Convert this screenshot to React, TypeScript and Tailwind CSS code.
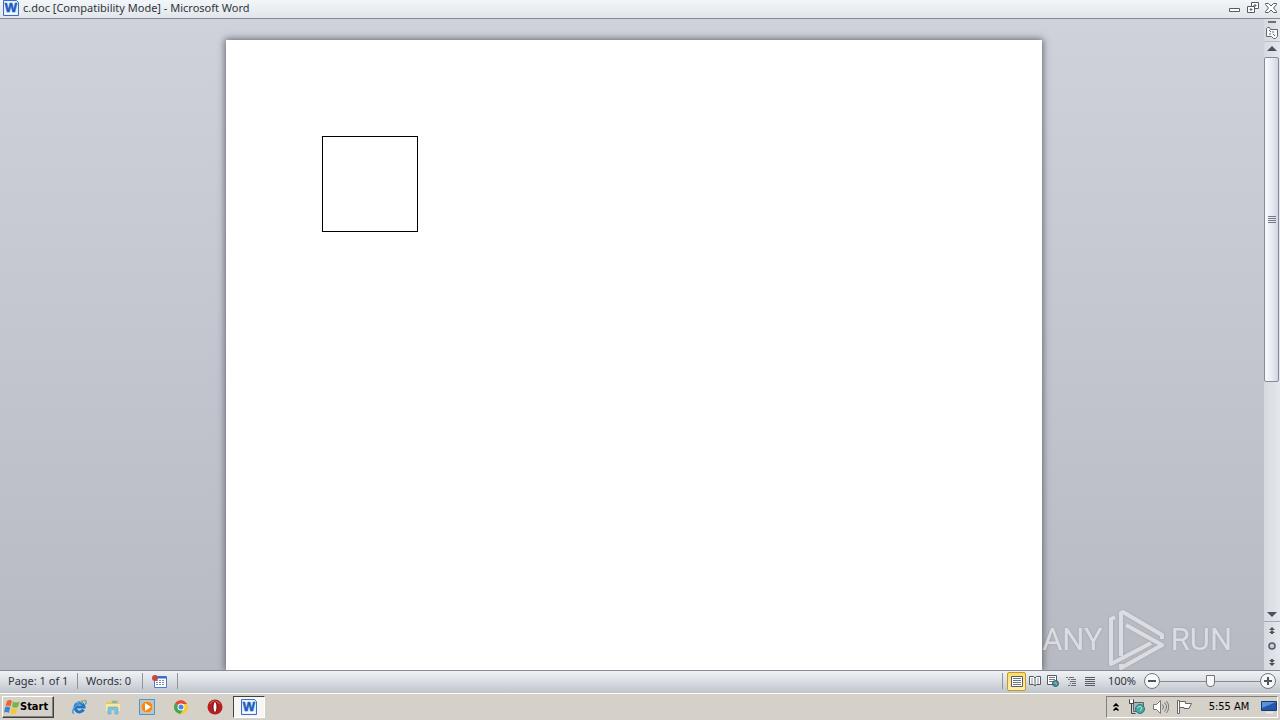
import React from 'react';

interface IconButtonProps {
  label: string;
  className?: string;
  children: React.ReactNode;
}

const IconButton: React.FC<IconButtonProps> = ({ label, className = '', children }) => (
  <button type="button" aria-label={label} className={`flex items-center justify-center ${className}`}>
    {children}
  </button>
);

const WordIcon = () => (
  <svg width="16" height="16" viewBox="0 0 16 16" aria-hidden="true">
    <path d="M.5.5h13l2 2v13H.5z" fill="#e3effc" stroke="#3b6fc0" />
    <path d="M2 2.500h9M2 13.500h12" stroke="#fff" />
    <text x="8" y="12" textAnchor="middle" fontFamily="Liberation Sans, sans-serif" fontSize="13" fontWeight="bold" fill="#1c5cc0" stroke="#1c5cc0" strokeWidth=".5">W</text>
  </svg>
);

const TitleBar = () => (
  <header className="flex h-[19px] shrink-0 items-center justify-between border-b border-[#868b93] bg-linear-to-b from-[#f3f6f8] to-[#e1e6eb] pl-[3px] pr-[2px] pb-[2px]">
    <div className="flex items-center gap-1">
      <WordIcon />
      <h1 className="font-['Noto_Sans',sans-serif] text-[11px] leading-4 whitespace-nowrap text-[#30343b]">c.doc [Compatibility Mode] - Microsoft Word</h1>
    </div>
    <div className="flex items-center gap-1">
      <IconButton label="Minimize" className="h-4 w-[14px]">
        <svg width="12" height="12" viewBox="0 0 12 12"><path d="M.5 6.500h10v3H.5z" fill="#fff" stroke="#555a66" /></svg>
      </IconButton>
      <IconButton label="Restore" className="h-4 w-[14px]">
        <svg width="12" height="12" viewBox="0 0 12 12" fill="#fff" stroke="#555a66">
          <path d="M4.500.5h7v6h-7z" /><path d="M7 3h2v1H7z" /><path d="M.5 4.500h7v6h-7z" /><path d="M3 7h2v1H3z" />
        </svg>
      </IconButton>
      <IconButton label="Close" className="h-4 w-[14px]">
        <svg width="12" height="12" viewBox="0 0 12 12">
          <path d="M.5 1.500h3L6 4l2.500-2.500h3v1L8.500 6l3 3.500v1h-3L6 8l-2.500 2.500h-3v-1l3-3.500-3-3.500z" fill="#fff" stroke="#555a66" />
        </svg>
      </IconButton>
    </div>
  </header>
);

const Watermark = () => (
  <div className="absolute right-8 bottom-0 flex h-[60px] items-center gap-[6px] font-['Roboto',sans-serif] text-[31px] leading-[60px] text-white opacity-50 drop-shadow-[0_0_1px_#7f848c]">
    <span>ANY</span>
    <svg width="56" height="60" viewBox="0 0 56 60" fill="none" stroke="#fff" strokeWidth="4" strokeLinejoin="round">
      <path d="M6 7L2 9v45l40-21" />
      <path d="M12 46V3l2-1 39 23v4" />
      <path d="M17 15l36 20-41 23v-4" />
    </svg>
    <span>RUN</span>
  </div>
);

const ScrollBar = () => (
  <aside className="flex w-4 shrink-0 flex-col bg-linear-to-r from-[#d5dae1] to-[#e4e8ed]">
    <IconButton label="Split" className="h-[6px] w-full">
      <span className="h-[2px] w-2 bg-[#6b7079]" />
    </IconButton>
    <IconButton label="View ruler" className="h-[17px] w-full border-b border-[#bcc1c8]">
      <svg width="12" height="12" viewBox="0 0 12 12" fill="#f8f8f8" stroke="#646972">
        <path d="M.5 1.500l1-1h2l1 2h7v7l-2 2h-2l-2-2h-5z" /><path d="M3 3l2 2M7 7l2 2M7 4v2M3 7h2" />
      </svg>
    </IconButton>
    <IconButton label="Scroll up" className="h-[15px] w-full pb-[2px]">
      <svg width="10" height="5" viewBox="0 0 10 5"><path d="M0 5l5-5 5 5z" fill="#4b505b" /></svg>
    </IconButton>
    <div className="flex min-h-0 flex-1 flex-col">
      <div className="flex h-[59%] w-[15px] flex-col items-center justify-center gap-px rounded-[2px] border border-[#858b98] bg-linear-to-r from-[#fafbfe] via-[#e9ecf4] to-[#d1d6e2]">
        <span className="h-px w-2 bg-[#737985]" />
        <span className="h-px w-2 bg-[#737985]" />
        <span className="h-px w-2 bg-[#737985]" />
        <span className="h-px w-2 bg-[#737985]" />
      </div>
    </div>
    <IconButton label="Scroll down" className="h-[15px] w-full border-b border-[#a6abb3]">
      <svg width="10" height="5" viewBox="0 0 10 5"><path d="M0 0h10L5 5z" fill="#4b505b" /></svg>
    </IconButton>
    <IconButton label="Previous page" className="h-4 w-full">
      <svg width="6" height="7" viewBox="0 0 6 7" fill="#4b505b"><path d="M0 3l3-3 3 3zM0 6l3-3 3 3zM2 6h2v1H2z" /></svg>
    </IconButton>
    <IconButton label="Select browse object" className="h-4 w-full">
      <svg width="8" height="8" viewBox="0 0 8 8"><circle cx="4" cy="4" r="3" fill="#c9cdd3" stroke="#555a66" strokeWidth="1.500" /></svg>
    </IconButton>
    <IconButton label="Next page" className="h-4 w-full">
      <svg width="6" height="7" viewBox="0 0 6 7" fill="#4b505b"><path d="M0 1l3 3 3-3zM0 4l3 3 3-3zM2 0h2v1H2z" /></svg>
    </IconButton>
  </aside>
);

const Divider = () => <span className="h-4 w-px bg-[#8f949d]" />;

const ViewButtons = () => (
  <div className="flex items-center">
    <IconButton label="Print layout" className="h-[19px] w-[19px] rounded-[2px] border border-[#c29b29] bg-linear-to-b from-[#fbdc72] to-[#fff0a3]">
      <svg width="12" height="11" viewBox="0 0 12 11"><path d="M.5.5h11v10H.5z" fill="#fff" stroke="#555a66" /><path d="M2 2.500h8M2 4.500h8M2 6.500h8M2 8.500h8" stroke="#6e7480" /></svg>
    </IconButton>
    <IconButton label="Full screen reading" className="h-[19px] w-[18px]">
      <svg width="12" height="11" viewBox="0 0 12 11" fill="#fff" stroke="#555a66"><path d="M.5.500h4L6 2l1.500-1.500h4v8h-4L6 10 4.500 8.500h-4zM6 2v8" /><path d="M2 3h2M2 5h2M2 7h2M8 3h2M8 5h2M8 7h2" stroke="#8d929b" /></svg>
    </IconButton>
    <IconButton label="Web layout" className="h-[19px] w-[18px]">
      <svg width="12" height="12" viewBox="0 0 12 12"><path d="M.5.500h9v9h-9z" fill="#fff" stroke="#555a66" /><path d="M2 2.500h6M2 4.500h6M2 6.500h4" stroke="#737985" /><circle cx="8.500" cy="8.500" r="3" fill="#478ca0" stroke="#276476" /><path d="M7 8l2-1v2l1 1" stroke="#8bc675" fill="none" /></svg>
    </IconButton>
    <IconButton label="Outline" className="h-[19px] w-[18px]">
      <svg width="10" height="9" viewBox="0 0 10 9" stroke="#686d77"><path d="M0 .5h2M3 .5h5M2 2.500h2M5 2.500h5M4 4.500h6M4 6.500h1M6 6.500h4M2 8.500h2M5 8.500h5" /></svg>
    </IconButton>
    <IconButton label="Draft" className="h-[19px] w-[19px]">
      <svg width="10" height="9" viewBox="0 0 10 9" stroke="#555a66"><path d="M0 .5h10M0 2.500h10M0 4.500h10M0 6.500h10M0 8.500h10" /></svg>
    </IconButton>
  </div>
);

const StatusBar = () => (
  <footer className="flex h-[23px] shrink-0 items-center justify-between border-t border-[#858a93] bg-linear-to-b from-[#f0f2f5] via-[#d9dde2] to-[#bfc4cc] pb-[2px] font-['Noto_Sans',sans-serif] text-[11px] leading-4 text-[#30343b]">
    <div className="flex items-center">
      <button type="button" className="w-[77px] pl-2 text-left whitespace-nowrap">Page: 1 of 1</button>
      <Divider />
      <button type="button" className="w-[64px] pl-2 text-left whitespace-nowrap">Words: 0</button>
      <Divider />
      <IconButton label="Record macro" className="h-4 w-[34px]">
        <svg width="16" height="13" viewBox="0 0 16 13">
          <path d="M2.500 1.500h12v11h-12z" fill="#fff" stroke="#4c79c9" /><path d="M3 2.500h11" stroke="#356bca" strokeWidth="2" />
          <path d="M4 5.500h9M4 7.500h9M4 9.500h9" stroke="#8390ac" strokeDasharray="2 1" /><circle cx="3" cy="3" r="3" fill="#c34b3e" />
        </svg>
      </IconButton>
      <Divider />
    </div>
    <div className="flex items-center">
      <Divider />
      <div className="pl-1"><ViewButtons /></div>
      <button type="button" className="w-[45px] pl-px text-center whitespace-nowrap">100%</button>
      <IconButton label="Zoom out" className="h-4 w-4 rounded-full border border-[#71767f] bg-[#f6f7f8]">
        <span className="h-[2px] w-2 bg-[#4f545d]" />
      </IconButton>
      <input
        type="range"
        aria-label="Zoom"
        min={0}
        max={200}
        defaultValue={100}
        className="h-4 w-[100px] appearance-none bg-transparent bg-[linear-gradient(#868b93,#868b93)] bg-[length:100%_1px] bg-center bg-no-repeat [&::-webkit-slider-thumb]:h-3 [&::-webkit-slider-thumb]:w-[9px] [&::-webkit-slider-thumb]:appearance-none [&::-webkit-slider-thumb]:rounded-b-[4px] [&::-webkit-slider-thumb]:border [&::-webkit-slider-thumb]:border-[#71767f] [&::-webkit-slider-thumb]:bg-[#f8f8f9]"
      />
      <IconButton label="Zoom in" className="mr-1 h-4 w-4 rounded-full border border-[#71767f] bg-[#f6f7f8]">
        <svg width="8" height="8" viewBox="0 0 8 8"><path d="M0 4h8M4 0v8" stroke="#4f545d" strokeWidth="2" /></svg>
      </IconButton>
    </div>
  </footer>
);

const WindowsLogo = () => (
  <svg width="16" height="16" viewBox="0 0 16 16" aria-hidden="true">
    <path d="M3 2q3-2 5 0L6.500 7.500Q4 6 1.500 7z" fill="#ed6334" />
    <path d="M9 2.500q3 2 6.500 0L14 8q-3 1.500-6-.2z" fill="#71b845" />
    <path d="M1.200 8q2.500-1 5 .5L4.800 14Q2.500 12.500 0 13.500z" fill="#3b86d1" />
    <path d="M7.500 9q3 1.500 6 .2L12.200 14.500q-3 1.500-6-.2z" fill="#f7c640" />
  </svg>
);

const QuickLaunch = () => (
  <nav className="flex items-center">
    <IconButton label="Internet Explorer" className="h-6 w-[34px]">
      <svg width="16" height="16" viewBox="0 0 16 16" fill="none">
        <path d="M12.500 10.500a4.500 4.500 0 1 1 .5-2.500H4" stroke="#1d75c8" strokeWidth="3" />
        <path d="M12 5a5 4 0 0 0-7-1" stroke="#65bff3" />
        <path d="M3 14.500C-2 13 8 1 14 1.500c2 .5 1 3 0 4" stroke="#4d9bdc" strokeWidth="1.500" />
        <path d="M9 3c4-2.500 6-2 5.500.5" stroke="#e5b72f" />
      </svg>
    </IconButton>
    <IconButton label="Windows Explorer" className="h-6 w-[34px]">
      <svg width="16" height="16" viewBox="0 0 16 16">
        <path d="M1 3h5l1-2h6l1 3v8H1z" fill="#e8c565" /><path d="M7 2h5v2H7z" fill="#6fb7d3" />
        <path d="M1 5h14v7H1z" fill="#fae99b" /><path d="M3 15V9q0-1 1-1h8q1 0 1 1v6h-3v-4H6v4z" fill="#7cc5e8" stroke="#529fc7" strokeWidth=".5" />
      </svg>
    </IconButton>
    <IconButton label="Media Player" className="h-6 w-[34px]">
      <svg width="16" height="16" viewBox="0 0 16 16">
        <path d="M.5.500h15v15H.5z" fill="#a5c9e9" stroke="#5792c2" /><circle cx="8" cy="8" r="6" fill="#f18a18" stroke="#fac478" /><path d="M6 4l6 4-6 4z" fill="#fff" />
      </svg>
    </IconButton>
    <IconButton label="Chrome" className="h-6 w-[34px]">
      <svg width="14" height="14" viewBox="0 0 14 14">
        <circle cx="7" cy="7" r="7" fill="#f7cb32" /><path d="M7 7L1 3.500A7 7 0 0 1 13 4H7z" fill="#e04a3b" />
        <path d="M1 3.500A7 7 0 0 0 6.500 14l3-5.500L7 7z" fill="#45a556" /><circle cx="7" cy="7" r="3.500" fill="#fff" /><circle cx="7" cy="7" r="2.500" fill="#4a87de" />
      </svg>
    </IconButton>
    <IconButton label="Opera" className="h-6 w-[34px]">
      <svg width="16" height="16" viewBox="0 0 16 16">
        <circle cx="8" cy="8" r="7.500" fill="#b91d20" /><path d="M3 5q4-6 10 0" fill="none" stroke="#df6257" /><ellipse cx="8" cy="8" rx="2" ry="5.500" fill="#fff" stroke="#6e080d" />
      </svg>
    </IconButton>
  </nav>
);

const Tray = () => (
  <div className="flex h-[22px] items-center border border-t-[#808080] border-r-white border-b-white border-l-[#808080] text-[11px] leading-4 text-black">
    <IconButton label="Show hidden icons" className="h-5 w-[18px]">
      <svg width="6" height="8" viewBox="0 0 6 8" fill="none" stroke="#000" strokeWidth="1.500"><path d="M.5 3.500L3 1l2.500 2.500M.5 7.500L3 5l2.500 2.500" /></svg>
    </IconButton>
    <IconButton label="Network" className="h-5 w-6">
      <svg width="16" height="16" viewBox="0 0 16 16">
        <path d="M4.500 3.500h10v9h-10z" fill="#a7b7bc" stroke="#55676d" /><path d="M.5.500v4h4v-4M2.500 5v9.500h4" fill="none" stroke="#444" /><path d="M1 1h3v3H1z" fill="#fff" />
        <circle cx="11" cy="10" r="4.500" fill="#49a7a1" stroke="#2b7b7e" /><path d="M8 9l3-2 2 2-2 3" fill="none" stroke="#b8e5d0" />
      </svg>
    </IconButton>
    <IconButton label="Volume" className="h-5 w-6">
      <svg width="16" height="14" viewBox="0 0 16 14" fill="#fff" stroke="#777">
        <path d="M.5 4.500h3l4-4v13l-4-4h-3z" /><path d="M9.500 4.500q2 2.500 0 5M11.500 2.500q4 4.500 0 9M13.500 1q4.500 6 0 12" fill="none" />
      </svg>
    </IconButton>
    <IconButton label="Action Center" className="h-5 w-6">
      <svg width="16" height="14" viewBox="0 0 16 14" fill="#fff" stroke="#666">
        <path d="M2.500 1.500h6v2h6L12 8.500H7v-1H2.500z" /><path d="M.5.500h2v13h-2z" />
      </svg>
    </IconButton>
    <time className="w-[64px] text-center whitespace-nowrap">5:55 AM</time>
    <IconButton label="Show desktop" className="h-5 w-4">
      <svg width="16" height="14" viewBox="0 0 16 14">
        <path d="M.5 1.500h15v9H.5z" fill="#2456ac" stroke="#183a72" /><path d="M1 2h14L1 8z" fill="#5a91dc" /><path d="M5 12.500h7" stroke="#e6e8ec" strokeWidth="2" />
      </svg>
    </IconButton>
  </div>
);

const Taskbar = () => (
  <div className="flex h-[27px] shrink-0 items-center justify-between border-t border-white bg-[#d5d0c8] pr-[2px] pl-[2px]">
    <div className="flex items-center">
      <button type="button" className="mr-2 flex h-[22px] w-[52px] items-center border border-t-white border-r-[#404040] border-b-[#404040] border-l-white pl-px text-[11px] leading-4 font-bold text-black shadow-[inset_-1px_-1px_#808080]">
        <WindowsLogo />
        Start
      </button>
      <QuickLaunch />
      <button type="button" aria-label="c.doc - Microsoft Word" className="ml-px flex h-[22px] w-8 items-center justify-center border border-t-[#404040] border-r-white border-b-white border-l-[#404040] bg-[#f7f6f4]">
        <WordIcon />
      </button>
    </div>
    <Tray />
  </div>
);

const App: React.FC = () => (
  <div className="flex h-screen flex-col overflow-hidden font-['DejaVu_Sans_Condensed','Noto_Sans',sans-serif]">
    <TitleBar />
    <div className="flex min-h-0 flex-1">
      <main className="relative min-w-0 flex-1 overflow-hidden bg-linear-to-b from-[#cfd2db] to-[#b7bac3] pt-[21px] pl-1">
        <article className="mx-auto h-full w-[816px] bg-white p-24 shadow-[0_0_7px_1px_#62666e]">
          <div className="h-24 w-24 border border-black" />
        </article>
        <Watermark />
      </main>
      <ScrollBar />
    </div>
    <StatusBar />
    <Taskbar />
  </div>
);

export default App;
